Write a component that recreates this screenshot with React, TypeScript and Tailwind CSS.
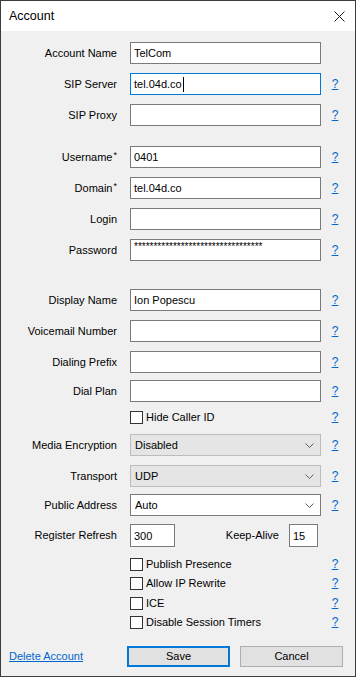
import type { ReactNode } from 'react';

const font = { fontFamily: '"Liberation Sans", Arial, sans-serif' };

const Help = () => (
  <a href="#" className="w-[24px] text-center text-[12px] leading-none text-[#0066cc] underline">
    ?
  </a>
);

interface RowProps {
  label?: ReactNode;
  className: string;
  help?: boolean;
  children: ReactNode;
}

function Row({ label, className, help = true, children }: RowProps) {
  return (
    <div className={`flex items-center ${className}`}>
      <div className="w-[117px] pr-[1px] text-right">{label}</div>
      <div className="ml-[12px] w-[191px]">{children}</div>
      <div className="ml-[2px] flex w-[24px] justify-center">{help && <Help />}</div>
    </div>
  );
}

function TextBox({ value = '', focused = false }: { value?: string; focused?: boolean }) {
  return (
    <div
      className={`flex h-[22px] items-center bg-white px-[3px] ${
        focused ? 'border border-[#0078d7]' : 'border border-[#7a7a7a]'
      }`}
    >
      {value}
      {focused && <span className="ml-[1px] h-[15px] w-[1px] bg-black" />}
    </div>
  );
}

const Chevron = () => (
  <svg width="9" height="5" viewBox="0 0 9 5" fill="none" stroke="#606060" strokeWidth="1">
    <path d="M0.5 0.5 L4.5 4.5 L8.5 0.5" />
  </svg>
);

function Select({ value, disabled = false }: { value: string; disabled?: boolean }) {
  return (
    <div
      className={`flex h-[22px] items-center justify-between pl-[4px] pr-[6px] ${
        disabled ? 'border border-[#bcbcbc] bg-[#e5e5e5]' : 'border border-[#7a7a7a] bg-white'
      }`}
    >
      <span>{value}</span>
      <Chevron />
    </div>
  );
}

function Check({ label }: { label: string }) {
  return (
    <div className="flex items-center">
      <span className="h-[13px] w-[13px] border border-[#333333] bg-white" />
      <span className="ml-[3px]">{label}</span>
    </div>
  );
}

const Req = ({ children }: { children: string }) => (
  <span>
    {children}
    <span className="relative -top-[3px] ml-[1px] text-[9px]">*</span>
  </span>
);

export default function App() {
  return (
    <div
      style={font}
      className="flex h-[677px] w-[356px] flex-col border border-[#3c3c3c] bg-[#f0f0f0] text-[11px] text-black"
    >
      {/* Title bar */}
      <div className="flex h-[30px] items-center justify-between bg-white pl-[8px] pr-[10px]">
        <span className="text-[12.5px]">Account</span>
        <svg width="11" height="11" viewBox="0 0 11 11" stroke="#1a1a1a" strokeWidth="1">
          <path d="M0.5 0.5 L10.5 10.5 M10.5 0.5 L0.5 10.5" />
        </svg>
      </div>

      <Row label="Account Name" className="mt-[11px]" help={false}>
        <TextBox value="TelCom" />
      </Row>
      <Row label="SIP Server" className="mt-[9px]">
        <TextBox value="tel.04d.co" focused />
      </Row>
      <Row label="SIP Proxy" className="mt-[9px]">
        <TextBox />
      </Row>

      <Row label={<Req>Username</Req>} className="mt-[20px]">
        <TextBox value="0401" />
      </Row>
      <Row label={<Req>Domain</Req>} className="mt-[9px]">
        <TextBox value="tel.04d.co" />
      </Row>
      <Row label="Login" className="mt-[9px]">
        <TextBox />
      </Row>
      <Row label="Password" className="mt-[9px]">
        <div className="flex h-[22px] items-start border border-[#7a7a7a] bg-white px-[3px] pt-[2px] text-[10px] leading-none">
          *********************************
        </div>
      </Row>

      <Row label="Display Name" className="mt-[28px]">
        <TextBox value="Ion Popescu" />
      </Row>
      <Row label="Voicemail Number" className="mt-[9px]">
        <TextBox />
      </Row>
      <Row label="Dialing Prefix" className="mt-[9px]">
        <TextBox />
      </Row>
      <Row label="Dial Plan" className="mt-[7px]">
        <TextBox />
      </Row>
      <Row className="mt-[8px] h-[14px]">
        <Check label="Hide Caller ID" />
      </Row>

      <Row label="Media Encryption" className="mt-[10px]">
        <Select value="Disabled" disabled />
      </Row>
      <Row label="Transport" className="mt-[9px]">
        <Select value="UDP" disabled />
      </Row>
      <Row label="Public Address" className="mt-[7px]">
        <Select value="Auto" />
      </Row>

      <Row label="Register Refresh" className="mt-[8px]" help={false}>
        <div className="flex items-center">
          <div className="flex h-[23px] w-[45px] items-start border border-[#7a7a7a] bg-white px-[3px] pt-[3px]">
            300
          </div>
          <span className="ml-auto mr-[10px]">Keep-Alive</span>
          <div className="flex h-[23px] w-[29px] items-start border border-[#7a7a7a] bg-white px-[3px] pt-[3px]">
            15
          </div>
          <div className="w-[3px]" />
        </div>
      </Row>

      <Row className="mt-[10px] h-[14px]">
        <Check label="Publish Presence" />
      </Row>
      <Row className="mt-[5px] h-[14px]">
        <Check label="Allow IP Rewrite" />
      </Row>
      <Row className="mt-[6px] h-[14px]">
        <Check label="ICE" />
      </Row>
      <Row className="mt-[5px] h-[14px]">
        <Check label="Disable Session Timers" />
      </Row>

      {/* Footer */}
      <div className="mt-[17px] flex h-[21px] items-center">
        <a href="#" className="ml-[8px] text-[#0066cc] underline">
          Delete Account
        </a>
        <button
          type="button"
          className="ml-[44px] h-[21px] w-[103px] border-2 border-[#0078d7] bg-[#e1e1e1] text-[11px]"
        >
          Save
        </button>
        <button
          type="button"
          className="ml-[10px] h-[21px] w-[103px] border border-[#adadad] bg-[#e1e1e1] text-[11px]"
        >
          Cancel
        </button>
      </div>
    </div>
  );
}
